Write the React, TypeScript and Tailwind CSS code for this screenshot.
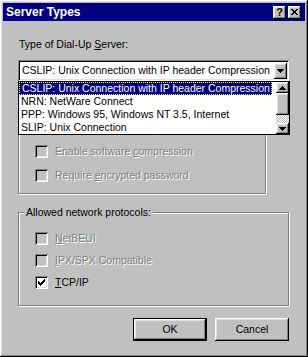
import type { ReactNode } from 'react';

// Win95 bevels
const raised =
  'shadow-[inset_-1px_-1px_#000,inset_1px_1px_#fff,inset_-2px_-2px_#808080,inset_2px_2px_#dfdfdf]';
const sunken =
  'shadow-[inset_1px_1px_#808080,inset_-1px_-1px_#fff,inset_2px_2px_#000,inset_-2px_-2px_#dfdfdf]';

function Arrow({ up }: { up?: boolean }) {
  return (
    <svg width="7" height="4" viewBox="0 0 7 4" className={up ? 'rotate-180' : ''}>
      <path d="M0 0h7v1H0zM1 1h5v1H1zM2 2h3v1H2zM3 3h1v1H3z" fill="#000" />
    </svg>
  );
}

function Label({ pre, u, post }: { pre: string; u: string; post: string }) {
  return (
    <span>
      {pre}
      <span className="underline underline-offset-[1px]">{u}</span>
      {post}
    </span>
  );
}

function Check({
  children,
  disabled,
  checked,
}: {
  children: ReactNode;
  disabled?: boolean;
  checked?: boolean;
}) {
  return (
    <div className="flex h-[13px] items-center gap-[7px]">
      <span
        className={`flex h-[13px] w-[13px] shrink-0 items-center justify-center ${sunken} ${
          disabled ? 'bg-[#c0c0c0]' : 'bg-white'
        }`}
      >
        {checked && (
          <svg width="7" height="7" viewBox="0 0 7 7">
            <path d="M0 2h1v1h1v1h1V3h1V2h1V1h1V0h1v3H6v1H5v1H4v1H3v1H2V6H1V5H0z" fill="#000" />
          </svg>
        )}
      </span>
      <span
        className={
          disabled ? 'text-[#808080] [text-shadow:1px_1px_0_#fff]' : 'text-black'
        }
      >
        {children}
      </span>
    </div>
  );
}

const items = [
  'CSLIP: Unix Connection with IP header Compression',
  'NRN: NetWare Connect',
  'PPP: Windows 95, Windows NT 3.5, Internet',
  'SLIP: Unix Connection',
];

export default function App() {
  return (
    <div
      className={`flex h-[357px] w-[308px] flex-col whitespace-nowrap bg-[#c0c0c0] p-[3px] font-['Liberation_Sans',Arial,sans-serif] text-[10.5px] leading-[13px] text-black ${raised}`}
    >
      {/* title bar */}
      <div className="flex h-[18px] items-center justify-between bg-[#000080] pl-[3px] pr-[4px]">
        <span className="text-[12px] font-bold text-white">Server Types</span>
        <div className="flex gap-[2px]">
          <span
            className={`flex h-[13px] w-[13px] items-center justify-center bg-[#c0c0c0] text-[11px] font-bold leading-none ${raised}`}
          >
            ?
          </span>
          <span className={`flex h-[13px] w-[13px] items-center justify-center bg-[#c0c0c0] ${raised}`}>
            <svg width="7" height="6" viewBox="0 0 7 6">
              <path d="M0 0h2v1h1v1h1V1h1V0h2v1H6v1H5v2h1v1h1v1H5V5H4V4H3v1H2v1H0V5h1V4h1V2H1V1H0z" fill="#000" />
            </svg>
          </span>
        </div>
      </div>

      <div className="relative flex flex-1 flex-col pl-[15px] pr-[16px]">
        <div className="mt-[17px] pl-[1px]">
          Type of Dial-Up <Label pre="" u="S" post="erver:" />
        </div>

        {/* combo box */}
        <div className={`mt-[9px] flex h-[21px] items-center bg-white pl-[4px] pr-[2px] ${sunken}`}>
          <span className="flex-1">{items[0]}</span>
          <span className={`flex h-[16px] w-[13px] items-center justify-center bg-[#c0c0c0] ${raised}`}>
            <Arrow />
          </span>
        </div>

        {/* group box (partly covered by the list) */}
        <div className="mt-[15px] flex h-[98px] w-[248px] flex-col justify-end gap-[11px] border border-[#808080] pb-[11px] pl-[16px] shadow-[inset_1px_1px_#fff,1px_1px_#fff]">
          <Check disabled>
            <Label pre="Enable software " u="c" post="ompression" />
          </Check>
          <Check disabled>
            <Label pre="Require " u="e" post="ncrypted password" />
          </Check>
        </div>

        {/* protocols */}
        <div className="relative mt-[18px] flex h-[94px] flex-col gap-[9px] border border-[#808080] pl-[16px] pt-[19px] shadow-[inset_1px_1px_#fff,1px_1px_#fff]">
          <span className="absolute left-[5px] top-[-7px] bg-[#c0c0c0] px-[2px]">
            Allowed network protocols:
          </span>
          <Check disabled>
            <Label pre="" u="N" post="etBEUI" />
          </Check>
          <Check disabled>
            <Label pre="" u="I" post="PX/SPX Compatible" />
          </Check>
          <Check checked>
            <Label pre="" u="T" post="CP/IP" />
          </Check>
        </div>

        <div className="mt-[12px] flex justify-end gap-[8px]">
          <button
            className={`flex h-[23px] w-[74px] items-center justify-center border border-black bg-[#c0c0c0] ${raised}`}
          >
            OK
          </button>
          <button className={`flex h-[23px] w-[74px] items-center justify-center bg-[#c0c0c0] ${raised}`}>
            Cancel
          </button>
        </div>

        {/* dropped list */}
        <div className="absolute left-[15px] right-[15px] top-[60px] flex h-[54px] border border-black bg-white">
          <div className="flex flex-1 flex-col overflow-hidden">
            {items.map((t, i) => (
              <div
                key={t}
                className={`h-[13px] pl-[2px] ${
                  i === 0
                    ? 'w-fit border border-dotted border-[#ffff00] bg-[#000080] pl-[1px] pr-[1px] leading-[11px] text-white'
                    : ''
                }`}
              >
                {t}
              </div>
            ))}
          </div>
          <div className="flex w-[13px] flex-col">
            <span className={`flex h-[11px] items-center justify-center bg-[#c0c0c0] ${raised}`}>
              <Arrow up />
            </span>
            <span className={`h-[22px] bg-[#c0c0c0] ${raised}`} />
            <span className="flex-1 bg-[repeating-conic-gradient(#c0c0c0_0_25%,#fff_0_50%)] bg-[length:2px_2px]" />
            <span className={`flex h-[11px] items-center justify-center bg-[#c0c0c0] ${raised}`}>
              <Arrow />
            </span>
          </div>
        </div>
      </div>
    </div>
  );
}
